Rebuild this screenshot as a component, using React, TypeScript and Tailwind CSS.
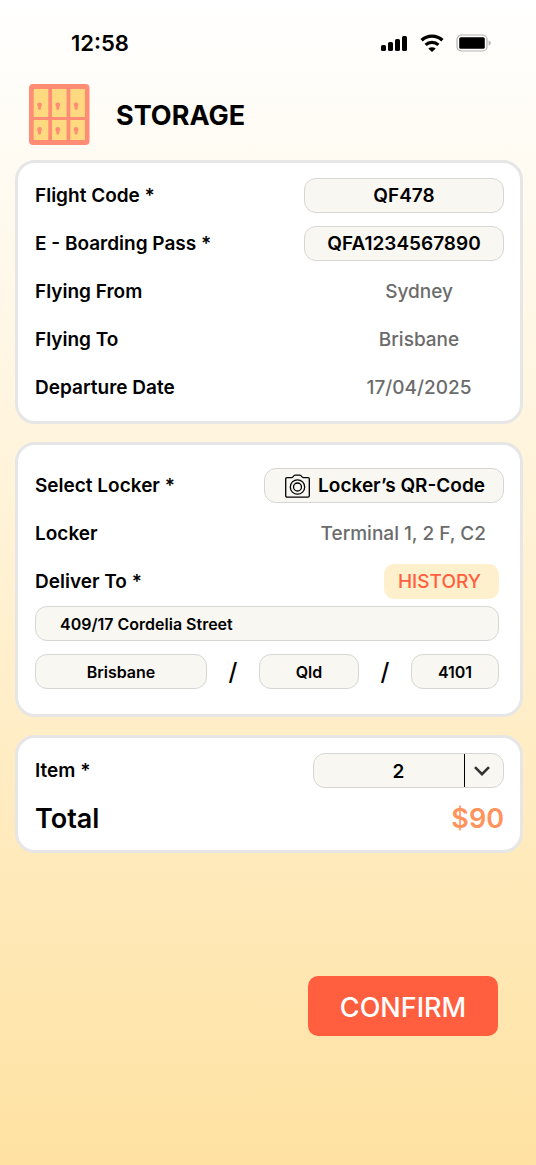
import { useState } from "react";
import type { ComponentProps, ReactNode } from "react";
import { clsx } from "clsx";

const flight = [
  { label: "Flying From", value: "Sydney" },
  { label: "Flying To", value: "Brisbane" },
  { label: "Departure Date", value: "17/04/2025" },
];

function StatusBar() {
  return (
    <div className="flex h-[84px] items-center justify-between pl-[71px] pr-11 pt-0.5">
      <span className="text-[22px] font-semibold">12:58</span>
      <div className="flex items-center gap-3">
        <svg className="h-4 w-[27px]" viewBox="0 0 27 16" aria-hidden="true">
          <rect x="0" y="10" width="5" height="6" rx="1.6" />
          <rect x="7" y="7" width="5" height="9" rx="1.6" />
          <rect x="14" y="4" width="5" height="12" rx="1.6" />
          <rect x="21" y="1" width="5" height="15" rx="1.6" />
        </svg>
        <svg className="h-[18px] w-6" viewBox="0 0 24 18" fill="none" stroke="currentColor" aria-hidden="true">
          <path d="M1.6 6.2a15.200 15.200 0 0 1 20.800 0" strokeWidth="3.4" />
          <path d="M5.600 10.800a9.400 9.400 0 0 1 12.800 0" strokeWidth="3.2" />
          <path d="M12 18l-3.7-3.4a5.4 5.4 0 0 1 7.4 0z" fill="currentColor" stroke="none" />
        </svg>
        <svg className="h-[18px] w-9" viewBox="0 0 36 18" aria-hidden="true">
          <rect x="1" y="1" width="30" height="16" rx="4.5" fill="#fff" stroke="#b3b1ae" strokeWidth="1.2" />
          <rect x="3.2" y="3.2" width="25.6" height="11.6" rx="1.6" />
          <path d="M32.6 6.4c1.4.5 2.2 1.4 2.2 2.6s-.8 2.1-2.2 2.6z" fill="#b3b1ae" />
        </svg>
      </div>
    </div>
  );
}

function LockerIcon() {
  const columns = [4.7, 23, 41.3];
  return (
    <svg className="h-[61px] w-[61px]" viewBox="0 0 61 61" aria-hidden="true">
      <rect width="60.5" height="61" rx="4" fill="#ff8d75" />
      {columns.map((x) => (
        <g key={x}>
          <rect x={x} y="5" width="14.6" height="28" fill="#ffd97f" />
          <rect x={x} y="36" width="14.6" height="20" fill="#ffd97f" />
          {[20.8, 45.4].map((y) => (
            <g key={y} fill="#ff8d75">
              <circle cx={x + 5.8} cy={y} r="2.4" />
              <rect x={x + 4.4} y={y} width="2.8" height="5" rx="0.8" />
            </g>
          ))}
        </g>
      ))}
    </svg>
  );
}

function CameraIcon() {
  return (
    <svg className="h-6 w-[25px]" viewBox="0 0 25 24" fill="none" stroke="currentColor" strokeWidth="1.3" aria-hidden="true">
      <path d="M2 3.6h4.6c.9 0 1.3-.3 1.7-1.1.5-.9 1-1.3 2-1.3h4.4c1 0 1.5.4 2 1.3.4.8.8 1.1 1.7 1.1H23c.8 0 1.3.5 1.3 1.3v16.9c0 .8-.5 1.3-1.3 1.3H2c-.8 0-1.3-.5-1.3-1.3V4.9c0-.8.5-1.3 1.3-1.3z" />
      <circle cx="12.5" cy="13" r="7.2" />
      <circle cx="12.5" cy="13" r="4" />
    </svg>
  );
}

function Card({ className, children }: { className: string; children: ReactNode }) {
  return (
    <section className={clsx("flex flex-col gap-[13px] rounded-[20px] border-3 border-[#e6e6e6] bg-white pl-[17px] pr-4", className)}>
      {children}
    </section>
  );
}

function Row({ children }: { children: ReactNode }) {
  return <div className="flex min-h-[35px] items-center justify-between">{children}</div>;
}

function Field({ className, ...props }: ComponentProps<"input">) {
  return (
    <input
      className={clsx("h-[35px] min-w-0 rounded-xl border border-[#d6d6d3] bg-[#f8f7f2] font-semibold", className)}
      {...props}
    />
  );
}

export default function App() {
  const [items, setItems] = useState("2");

  return (
    <main className="min-h-screen bg-linear-to-b from-white to-[#ffe2a2] pb-12 font-['Inter',sans-serif] text-black">
      <StatusBar />

      <header className="flex items-center gap-[26px] pl-[29px]">
        <LockerIcon />
        <h1 className="pt-1 text-[27px] font-bold">STORAGE</h1>
      </header>

      <form className="mt-[15px] flex flex-col gap-[18px] pl-[15px] pr-[13px] text-[19px] leading-[35px]" onSubmit={(e) => e.preventDefault()}>
        <Card className="pb-4 pt-[15px]">
          <Row>
            <label htmlFor="flight" className="font-semibold">Flight Code *</label>
            <Field id="flight" defaultValue="QF478" className="w-[200px] text-center" />
          </Row>
          <Row>
            <label htmlFor="pass" className="font-semibold">E - Boarding Pass *</label>
            <Field id="pass" defaultValue="QFA1234567890" className="w-[200px] text-center" />
          </Row>
          {flight.map((item) => (
            <Row key={item.label}>
              <span className="font-semibold">{item.label}</span>
              <span className="w-[170px] text-center font-medium text-[#6b6b6b]">{item.value}</span>
            </Row>
          ))}
        </Card>

        <Card className="pb-[25px] pt-[23px]">
          <Row>
            <span className="font-semibold">Select Locker *</span>
            <button type="button" className="flex h-[35px] items-center gap-2 rounded-xl border border-[#d6d6d3] bg-[#f8f7f2] pl-5 pr-[18px] font-semibold">
              <CameraIcon />
              Locker’s QR-Code
            </button>
          </Row>
          <Row>
            <span className="font-semibold">Locker</span>
            <span className="pr-[18px] font-medium text-[#6b6b6b]">Terminal 1, 2 F, C2</span>
          </Row>
          <div className="pr-[5px]">
            <Row>
              <label htmlFor="street" className="font-semibold">Deliver To *</label>
              <button type="button" className="h-[35px] rounded-[10px] bg-[#fff0cd] pl-3.5 pr-[18px] font-medium text-[#ff5f3f]">
                HISTORY
              </button>
            </Row>
            <Field id="street" defaultValue="409/17 Cordelia Street" className="mt-[7px] w-full px-6 text-base" />
            <div className="mt-[13px] grid grid-cols-[172fr_52px_100fr_52px_88fr] items-center text-center">
              <Field aria-label="City" defaultValue="Brisbane" className="text-center text-base" />
              <span className="text-2xl font-medium">/</span>
              <Field aria-label="State" defaultValue="Qld" className="text-center text-base" />
              <span className="text-2xl font-medium">/</span>
              <Field aria-label="Postcode" defaultValue="4101" className="text-center text-base" />
            </div>
          </div>
        </Card>

        <Card className="pb-3.5 pt-[15px]">
          <Row>
            <label htmlFor="items" className="font-semibold">Item *</label>
            <div className="relative w-[191px]">
              <select
                id="items"
                value={items}
                onChange={(e) => setItems(e.target.value)}
                className="block h-[35px] w-full appearance-none rounded-xl border border-[#d6d6d3] bg-[#f8f7f2] pl-5 pr-10 font-semibold [text-align-last:center]"
              >
                <option>1</option>
                <option>2</option>
                <option>3</option>
              </select>
              <span className="pointer-events-none absolute inset-y-px right-px flex w-[39px] items-center justify-center border-l border-black pr-1">
                <svg className="h-2.5 w-4" viewBox="0 0 16 10" fill="none" stroke="#333" strokeWidth="2.6" aria-hidden="true">
                  <path d="M1 1.2l7 7 7-7" />
                </svg>
              </span>
            </div>
          </Row>
          <div className="flex h-[35px] items-center justify-between text-[27px] font-semibold">
            <span>Total</span>
            <span className="text-[#ff935c]">$90</span>
          </div>
        </Card>

        <button type="submit" className="mr-[25px] mt-[105px] h-[60px] w-[190px] self-end rounded-[10px] bg-[#ff5f3f] pt-0.5 text-[27px] font-medium text-white">
          CONFIRM
        </button>
      </form>
    </main>
  );
}
